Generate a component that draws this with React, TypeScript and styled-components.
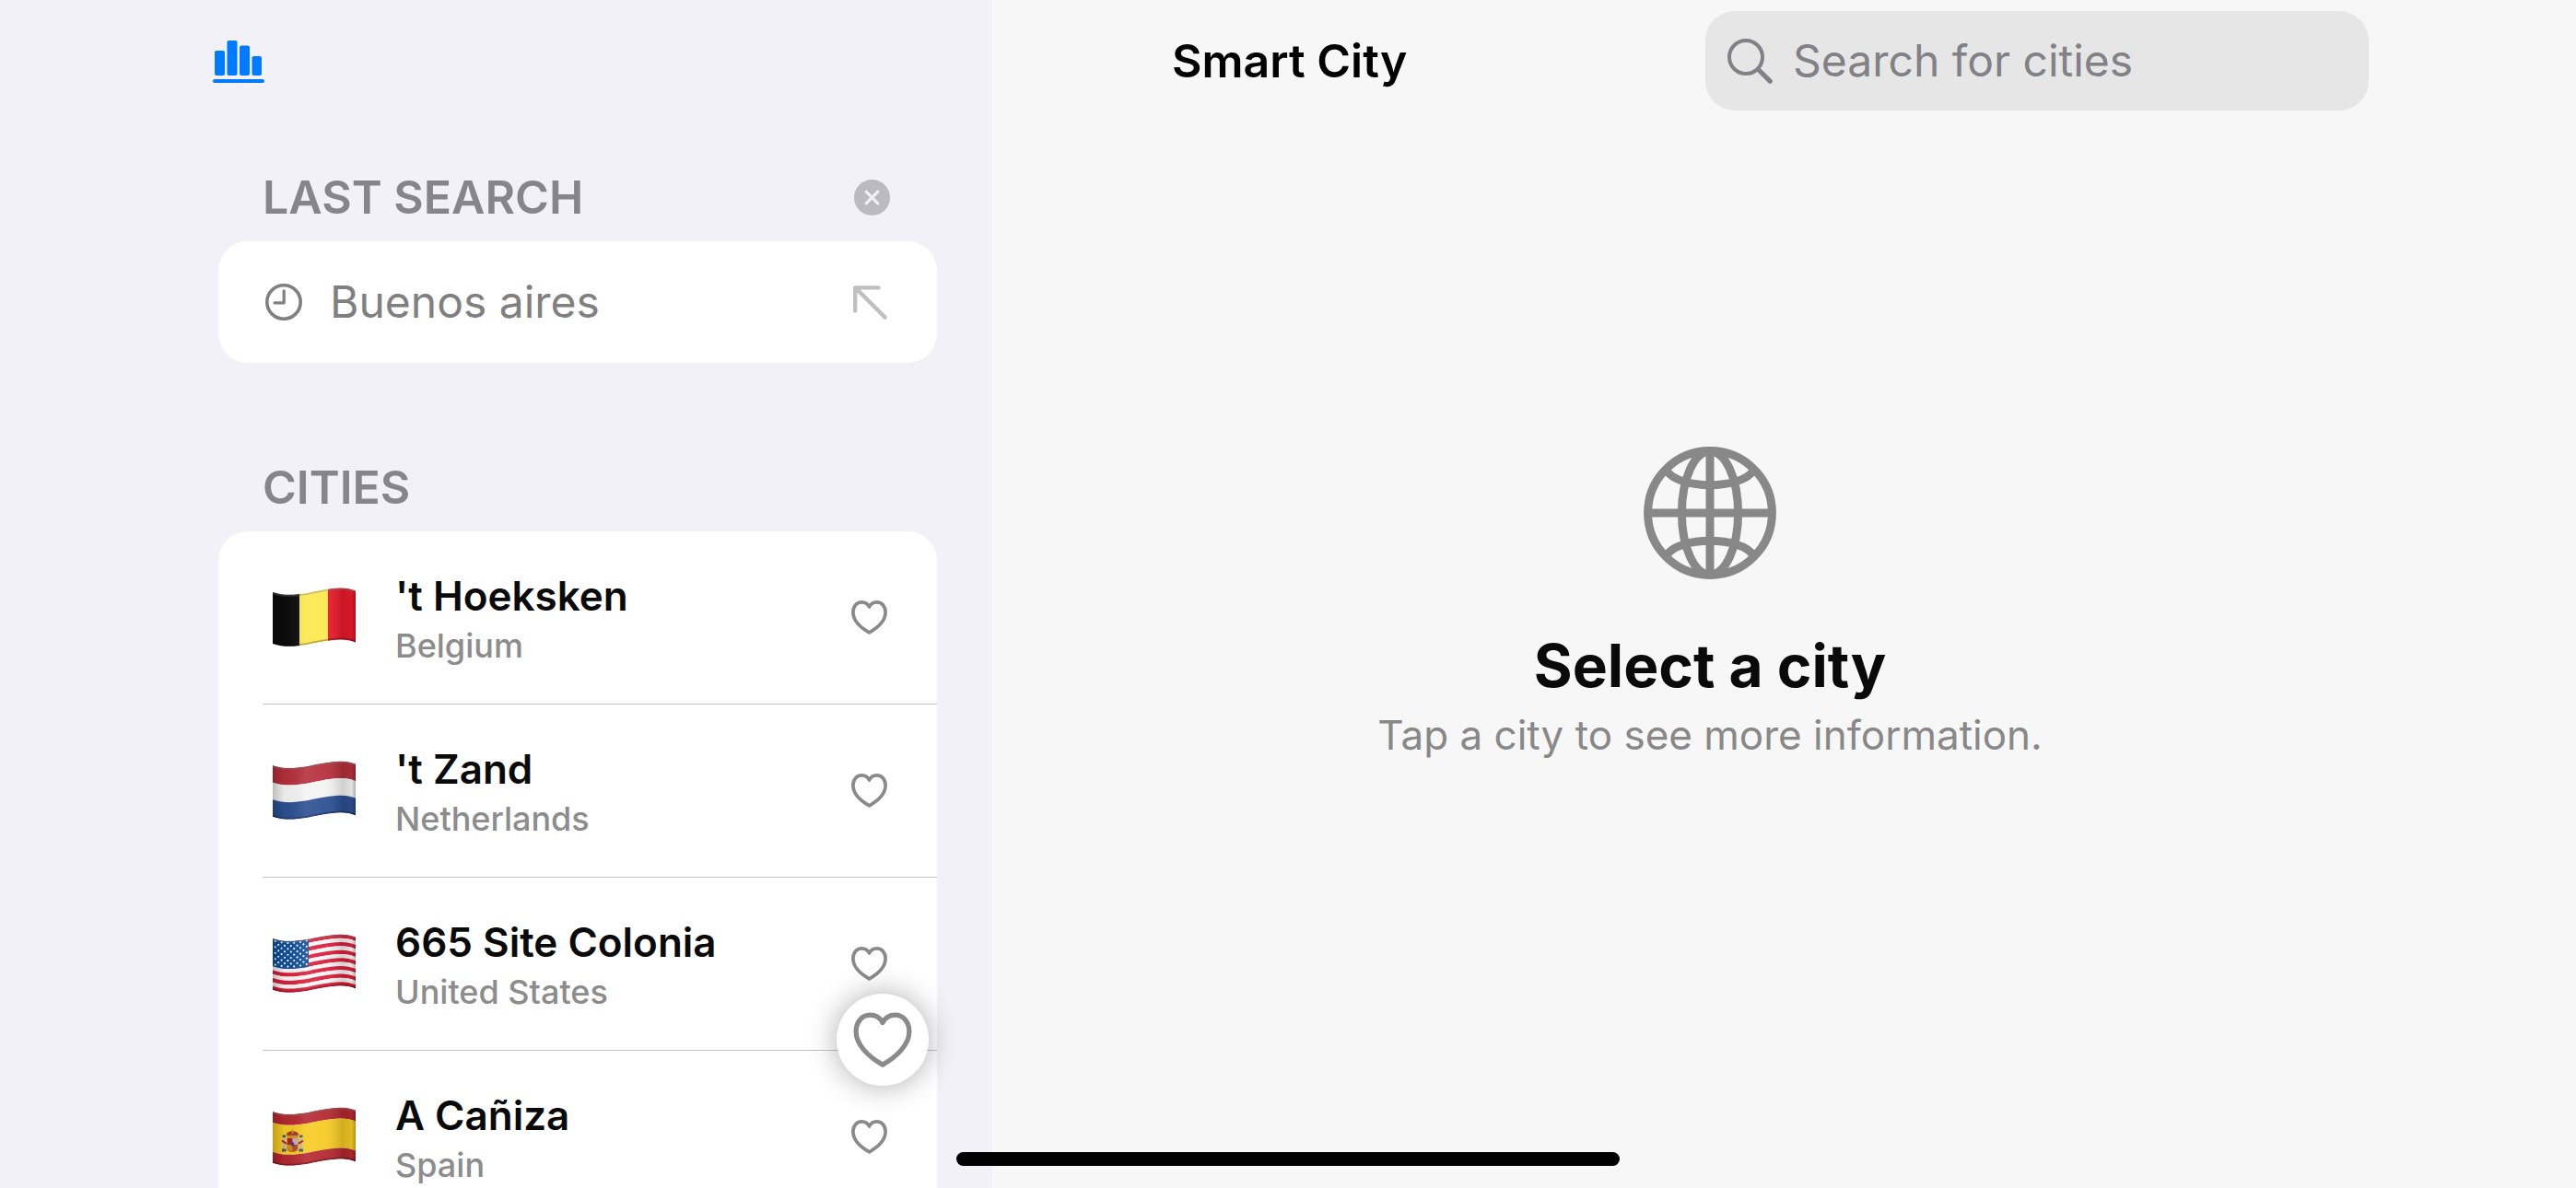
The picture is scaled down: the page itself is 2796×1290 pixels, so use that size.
import React, { useState } from 'react';
import styled, { createGlobalStyle } from 'styled-components';

const GlobalStyle = createGlobalStyle`
  *, *::before, *::after { box-sizing: border-box; }
  html, body { margin: 0; }
  body {
    background: #f7f7f7;
    color: #0a0a0a;
    font-family: Inter, "Noto Sans", "Liberation Sans", sans-serif;
    overflow: hidden;
  }
  button, input { font: inherit; color: inherit; }
  h1, h2, h3, p, ul { margin: 0; padding: 0; font: inherit; }
`;

/* ---------- layout ---------- */

const Shell = styled.div`
  display: grid;
  grid-template-columns: minmax(0, 1077px) minmax(0, 1fr);
  height: 100vh;
  overflow: hidden;
`;

const Sidebar = styled.aside`
  position: relative;
  padding: 0 60px 0 237px;
  background: #f2f1f7;
  overflow: hidden;
`;

const SidebarBar = styled.div`
  display: flex;
  align-items: center;
  height: 134px;
  margin: 0 0 32px -6px;
`;

const Sections = styled.div`
  display: flex;
  flex-direction: column;
  gap: 87px;
`;

const SectionHeader = styled.div`
  display: flex;
  align-items: center;
  justify-content: space-between;
  height: 96px;
  padding: 0 51px 0 48px;
`;

const SectionTitle = styled.h2`
  color: #86858b;
  font-size: 50px;
  font-weight: 600;
  line-height: 60px;
`;

const Card = styled.ul`
  border-radius: 32px;
  background: #fff;
  list-style: none;
  overflow: hidden;
`;

const IconButton = styled.button`
  display: inline-flex;
  flex: none;
  padding: 0;
  border: 0;
  background: none;
  color: ${(p) => p.color ?? '#8a8a8a'};
  cursor: pointer;
`;

const RecentButton = styled.button`
  display: flex;
  align-items: center;
  gap: 30px;
  width: 100%;
  height: 132px;
  padding: 0 54px 0 51px;
  border: 0;
  background: none;
  color: #808080;
  font-size: 48px;
  line-height: 60px;
  text-align: left;
  cursor: pointer;
`;

const RecentName = styled.span`
  flex: 1;
`;

const CityItem = styled.li`
  display: flex;
  align-items: center;
  gap: 43px;
  height: 188px;
  margin-left: 48px;
  padding: 0 54px 0 11px;
  border-bottom: 1px solid #c4c4c6;
  &:last-child { border-bottom-color: transparent; }
`;

const CityText = styled.div`
  flex: 1;
  min-width: 0;
`;

const CityName = styled.h3`
  font-size: 44px;
  font-weight: 600;
  line-height: 60px;
`;

const CityLink = styled.a`
  color: inherit;
  text-decoration: none;
`;

const Country = styled.p`
  color: #8c8c8c;
  font-size: 36px;
  font-weight: 500;
  line-height: 48px;
`;

const FloatingButton = styled.button`
  position: absolute;
  right: 69px;
  bottom: 111px;
  display: flex;
  align-items: center;
  justify-content: center;
  width: 100px;
  height: 100px;
  padding: 0;
  border: 0;
  border-radius: 50%;
  background: #fff;
  color: #8a8a8a;
  box-shadow: 0 0 32px rgba(0, 0, 0, 0.33);
  cursor: pointer;
`;

const Detail = styled.main`
  display: flex;
  flex-direction: column;
  background: #f7f7f7;
`;

const DetailBar = styled.header`
  display: flex;
  align-items: center;
  justify-content: space-between;
  height: 132px;
  padding: 0 225px 0 195px;
`;

const PageTitle = styled.h1`
  color: #000;
  font-size: 50px;
  font-weight: 600;
  line-height: 60px;
`;

const SearchField = styled.label`
  display: flex;
  align-items: center;
  gap: 22px;
  width: 720px;
  height: 108px;
  padding: 0 24px;
  border-radius: 32px;
  background: #e6e6e6;
  color: #818186;
`;

const SearchInput = styled.input`
  flex: 1;
  min-width: 0;
  padding: 0;
  border: 0;
  outline: 0;
  background: none;
  color: #000;
  font-size: 48px;
  line-height: 60px;
  &::placeholder { color: #818186; opacity: 1; }
`;

const EmptyState = styled.section`
  display: flex;
  flex: 1;
  flex-direction: column;
  align-items: center;
  justify-content: center;
  padding: 0 161px 104px 0;
  color: #888;
  text-align: center;
`;

const EmptyTitle = styled.h2`
  margin-top: 54px;
  color: #0a0a0a;
  font-size: 64px;
  font-weight: 700;
  line-height: 80px;
`;

const EmptyHint = styled.p`
  font-size: 44px;
  line-height: 70px;
`;

const HomeIndicator = styled.div`
  position: fixed;
  bottom: 24px;
  left: 50%;
  width: 720px;
  height: 15px;
  margin-left: -360px;
  border-radius: 8px;
  background: #000;
`;

/* ---------- icons ---------- */

const ChartIcon = () => (
  <svg width="56" height="46" viewBox="0 0 56 46" fill="currentColor" aria-hidden="true">
    <rect x="2" y="11" width="11" height="27" rx="2" />
    <rect x="15.5" y="0" width="11" height="38" rx="2" />
    <rect x="29" y="5.5" width="11" height="32.5" rx="2" />
    <rect x="42.5" y="17" width="10.5" height="21" rx="2" />
    <rect x="0" y="42" width="56" height="4" rx="2" />
  </svg>
);

const ClearIcon = () => (
  <svg width="39" height="39" viewBox="0 0 39 39" aria-hidden="true">
    <circle cx="19.5" cy="19.5" r="19.5" fill="#bbbac0" />
    <path d="M13.2 13.2l12.6 12.6M25.8 13.2L13.2 25.8" stroke="#f2f1f7" strokeWidth="3.2" strokeLinecap="round" />
  </svg>
);

const ClockIcon = () => (
  <svg width="40" height="40" viewBox="0 0 40 40" fill="none" stroke="currentColor" aria-hidden="true">
    <circle cx="20" cy="20" r="18.2" strokeWidth="3.6" />
    <path d="M20.2 7.8v13H10" strokeWidth="3.2" strokeLinecap="round" strokeLinejoin="round" />
  </svg>
);

const ArrowIcon = () => (
  <svg width="37" height="37" viewBox="0 0 37 37" fill="none" stroke="#c0c0c0" strokeWidth="4.4" strokeLinecap="round" strokeLinejoin="round" aria-hidden="true">
    <path d="M2.2 27.6V2.4H27.6M2.4 2.4L34.6 34.6" />
  </svg>
);

const HeartIcon = ({ width, stroke }: { width: number; stroke: number }) => (
  <svg width={width} height={(width * 37) / 39} viewBox="0 0 39 37" fill="none" stroke="currentColor" strokeWidth={stroke} strokeLinejoin="round" aria-hidden="true">
    <path d="M19.5 34.8C10 29.5 1.9 21.5 1.9 12.8C1.9 6.5 5.9 1.9 11.3 1.9C14.8 1.9 17.8 3.6 19.5 7C21.2 3.6 24.2 1.9 27.7 1.9C33.1 1.9 37.1 6.5 37.1 12.8C37.1 21.5 29 29.5 19.5 34.8Z" />
  </svg>
);

const MagnifierIcon = () => (
  <svg width="49" height="49" viewBox="0 0 49 49" fill="none" stroke="currentColor" aria-hidden="true">
    <circle cx="20" cy="20" r="18" strokeWidth="4" />
    <path d="M33.5 33.5L46.2 46.2" strokeWidth="5.2" strokeLinecap="round" />
  </svg>
);

const GlobeIcon = () => (
  <svg width="144" height="144" viewBox="0 0 144 144" fill="none" stroke="currentColor" strokeWidth="9" aria-hidden="true">
    <circle cx="72" cy="72" r="67.4" />
    <ellipse cx="72" cy="72" rx="30.6" ry="67" />
    <path d="M72 4V140M4 72H140" />
    <path d="M25 26C38 47 106 47 119 26M25 118C38 97 106 97 119 118" />
  </svg>
);

/* ---------- flags ---------- */

const FLAG_DEPTH = 56;

/* A horizontal band of the waving cloth, from one depth below the top edge to another. */
const band = (from: number, to: number) =>
  `M0 ${5 + from}C18 ${11 + from} 36 ${6 + from} 52 ${3 + from}S80 ${-1 + from} 90 ${3.5 + from}` +
  `V${3.5 + to}C80 ${-1 + to} 68 ${0 + to} 52 ${3 + to}S18 ${11 + to} 0 ${5 + to}Z`;

const CLOTH = band(0, FLAG_DEPTH);

const Stripes = ({ colors, weights }: { colors: string[]; weights?: number[] }) => {
  const parts = weights ?? colors.map(() => 1);
  const total = parts.reduce((a, b) => a + b, 0);
  let depth = 0;
  return (
    <>
      {colors.map((color, i) => {
        const from = depth;
        depth += (parts[i] / total) * FLAG_DEPTH;
        return <path key={i} d={band(from, depth)} fill={color} />;
      })}
    </>
  );
};

const waveAt = (x: number) => 4.2 + 3.6 * Math.sin(((x + 4) / 90) * Math.PI * 2);

const Stars = () => (
  <g fill="#fff">
    {Array.from({ length: 9 }, (_, row) =>
      Array.from({ length: row % 2 ? 5 : 6 }, (_, col) => {
        const x = 2.8 + col * 6.8 + (row % 2 ? 3.4 : 0);
        return <circle key={`${row}-${col}`} cx={x} cy={waveAt(x) + 2.2 + row * 3.2} r="1.1" />;
      }),
    )}
  </g>
);

const CoatOfArms = () => (
  <g>
    <path d="M11 33h2.6v13H11zM29.4 33H32v13h-2.6z" fill="#b9b4ae" />
    <path d="M10 45.5h4.6v3H10zM28.4 45.5H33v3h-4.6zM10.5 30.5h3.6v2.6h-3.6zM28.9 30.5h3.6v2.6h-3.6z" fill="#4b5470" />
    <path d="M10 36.5l5 3.4M33 36.5l-5 3.4" stroke="#a8202c" strokeWidth="2" />
    <path d="M15.5 33.5h12v10.5q0 5-6 5t-6-5z" fill="#b06a20" />
    <path d="M16 34h5.5v7H16z" fill="#a8202c" />
    <path d="M21.5 34H27v7h-5.5z" fill="#c9a9bd" />
    <path d="M16 41h5.5v6.8Q16 47 16 43.5z" fill="#d58a1e" />
    <path d="M21.5 41H27v2.5q0 3.5-5.5 4.3z" fill="#b5432a" />
    <ellipse cx="21.5" cy="40.5" rx="1.8" ry="2.2" fill="#31447e" />
    <path d="M16 32.5l-1-4q3-2.5 6.5-2.5t6.5 2.5l-1 4z" fill="#a33a26" />
    <path d="M16.5 31.8h10M21.5 24v5" stroke="#d99a26" strokeWidth="1.4" />
  </g>
);

const artwork: Record<string, React.ReactNode> = {
  be: (
    <>
      <rect width="29" height="66" fill="#0b0b0b" />
      <rect x="29" width="31" height="66" fill="#fde84e" />
      <rect x="60" width="30" height="66" fill="#ea1a2b" />
    </>
  ),
  nl: <Stripes colors={['#b52f3c', '#f4f4f4', '#2c4f92']} />,
  us: (
    <>
      <Stripes colors={Array.from({ length: 13 }, (_, i) => (i % 2 ? '#f7f5f5' : '#dc1f3a'))} />
      <svg width="39" height="66" viewBox="0 0 39 66">
        <path d={band(0, (FLAG_DEPTH * 7) / 13)} fill="#0f4f9e" />
        <Stars />
      </svg>
    </>
  ),
  es: (
    <>
      <Stripes colors={['#b4282f', '#f6cb23', '#b4282f']} weights={[12, 32, 12]} />
      <CoatOfArms />
    </>
  ),
};

const Flag = ({ code }: { code: string }) => (
  <svg width="90" height="66" viewBox="0 0 90 66" aria-hidden="true">
    <defs>
      <clipPath id={`cloth-${code}`}>
        <path d={CLOTH} />
      </clipPath>
      <linearGradient id={`shade-${code}`}>
        <stop offset="0" stopColor="#000" stopOpacity="0.22" />
        <stop offset="0.14" stopColor="#000" stopOpacity="0.04" />
        <stop offset="0.4" stopColor="#fff" stopOpacity="0.1" />
        <stop offset="0.62" stopColor="#fff" stopOpacity="0.06" />
        <stop offset="0.84" stopColor="#000" stopOpacity="0.15" />
        <stop offset="0.95" stopColor="#000" stopOpacity="0.08" />
        <stop offset="1" stopColor="#000" stopOpacity="0.28" />
      </linearGradient>
    </defs>
    <g clipPath={`url(#cloth-${code})`}>
      {artwork[code]}
      <path d={CLOTH} fill={`url(#shade-${code})`} />
      <path d={band(FLAG_DEPTH - 2, FLAG_DEPTH)} fill="#000" fillOpacity="0.26" />
      <path d={band(0, 2)} fill="#777" fillOpacity="0.35" />
    </g>
  </svg>
);

/* ---------- page ---------- */

const cities = [
  { name: "'t Hoeksken", country: 'Belgium', code: 'be' },
  { name: "'t Zand", country: 'Netherlands', code: 'nl' },
  { name: '665 Site Colonia', country: 'United States', code: 'us' },
  { name: 'A Cañiza', country: 'Spain', code: 'es' },
];

export default function App() {
  const [query, setQuery] = useState('');

  return (
    <>
      <GlobalStyle />
      <Shell>
        <Sidebar>
          <SidebarBar>
            <IconButton type="button" color="#007aff" aria-label="Statistics">
              <ChartIcon />
            </IconButton>
          </SidebarBar>
          <Sections>
            <section>
              <SectionHeader>
                <SectionTitle>LAST SEARCH</SectionTitle>
                <IconButton type="button" aria-label="Clear last search">
                  <ClearIcon />
                </IconButton>
              </SectionHeader>
              <Card>
                <li>
                  <RecentButton type="button" onClick={() => setQuery('Buenos aires')}>
                    <ClockIcon />
                    <RecentName>Buenos aires</RecentName>
                    <ArrowIcon />
                  </RecentButton>
                </li>
              </Card>
            </section>
            <section>
              <SectionHeader>
                <SectionTitle>CITIES</SectionTitle>
              </SectionHeader>
              <Card>
                {cities.map((city) => (
                  <CityItem key={city.name}>
                    <Flag code={city.code} />
                    <CityText>
                      <CityName>
                        <CityLink href={`#${city.code}`}>{city.name}</CityLink>
                      </CityName>
                      <Country>{city.country}</Country>
                    </CityText>
                    <IconButton type="button" aria-label={`Add ${city.name} to favourites`}>
                      <HeartIcon width={39} stroke={3.7} />
                    </IconButton>
                  </CityItem>
                ))}
              </Card>
            </section>
          </Sections>
          <FloatingButton type="button" aria-label="Favourites">
            <HeartIcon width={64} stroke={3.2} />
          </FloatingButton>
        </Sidebar>
        <Detail>
          <DetailBar>
            <PageTitle>Smart City</PageTitle>
            <SearchField>
              <MagnifierIcon />
              <SearchInput
                type="text"
                aria-label="Search for cities"
                placeholder="Search for cities"
                value={query}
                onChange={(e) => setQuery(e.target.value)}
              />
            </SearchField>
          </DetailBar>
          <EmptyState>
            <GlobeIcon />
            <EmptyTitle>Select a city</EmptyTitle>
            <EmptyHint>Tap a city to see more information.</EmptyHint>
          </EmptyState>
        </Detail>
      </Shell>
      <HomeIndicator />
    </>
  );
}
